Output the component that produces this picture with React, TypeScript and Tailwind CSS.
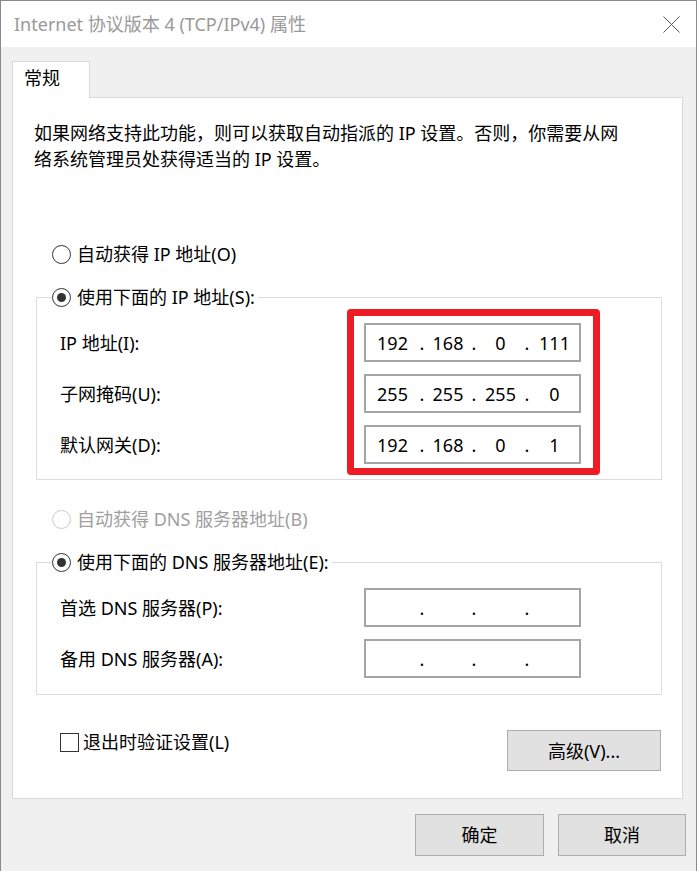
import React from 'react';

const font = { fontFamily: '"Noto Sans", "Noto Sans CJK SC", sans-serif' };

const Radio = ({ checked = false, disabled = false }: { checked?: boolean; disabled?: boolean }) => (
  <span
    className={`flex h-[19px] w-[19px] shrink-0 items-center justify-center rounded-full border-[1.5px] bg-white ${
      disabled ? 'border-[#cccccc]' : 'border-[#333333]'
    }`}
  >
    {checked && <span className="h-[9px] w-[9px] rounded-full bg-[#333333]" />}
  </span>
);

const IpBox = ({ parts }: { parts: string[] }) => {
  const widths = ['w-[53px]', 'w-[46px]', 'w-[47px]', 'flex-1'];
  return (
    <div className="flex h-[39px] w-[217px] items-center border-2 border-[#a5a5a5] bg-white text-[18px] leading-[26px] text-black">
      {parts.map((p, i) => (
        <React.Fragment key={i}>
          <span className={`${widths[i]} text-center`}>{p}</span>
          {i < 3 && <span className="w-[6px] text-center">.</span>}
        </React.Fragment>
      ))}
    </div>
  );
};

const FieldRow = ({ label, parts }: { label: string; parts: string[] }) => (
  <div className="flex h-[39px] items-center pl-[23px]">
    <span className="w-[304px] whitespace-nowrap">{label}</span>
    <IpBox parts={parts} />
  </div>
);

export default function App() {
  return (
    <div
      className="relative h-[871px] w-[697px] overflow-hidden border-x border-t border-[#8a8a8a] bg-[#f0f0f0] text-[18px] leading-[26px] text-black"
      style={font}
    >
      {/* title bar */}
      <div className="flex h-[46px] items-center justify-between bg-white pl-[13px] pr-[16px]">
        <span className="whitespace-nowrap text-[#999999]">Internet 协议版本 4 (TCP/IPv4) 属性</span>
        <svg width="17" height="17" viewBox="0 0 17 17" className="mt-[1px]">
          <path d="M0.5 0.5 L16.5 16.5 M16.5 0.5 L0.5 16.5" stroke="#555" strokeWidth="1" fill="none" />
        </svg>
      </div>

      <div className="pl-[11px] pr-[13px] pt-[14px]">
        {/* tab */}
        <div className="relative z-10 h-[37px] w-[78px] border border-b-0 border-[#d9d9d9] bg-white pl-[11px] pt-[3px]">
          常规
        </div>

        {/* panel */}
        <div className="-mt-px h-[702px] border border-[#d9d9d9] bg-white pl-[23px] pt-[22px]">
          <p className="-ml-[2px] whitespace-nowrap">
            如果网络支持此功能，则可以获取自动指派的 IP 设置。否则，你需要从网
            <br />
            络系统管理员处获得适当的 IP 设置。
          </p>

          <div className="mt-[69px] flex h-[26px] items-center gap-[6px] pl-[16px]">
            <Radio />
            <span>自动获得 IP 地址(O)</span>
          </div>

          <div className="mt-[30px] h-[183px] w-[626px] border border-[#dcdcdc]">
            <div className="-mt-[14px] ml-[15px] flex h-[26px] w-fit items-center gap-[6px] bg-white pr-[3px]">
              <Radio checked />
              <span>使用下面的 IP 地址(S):</span>
            </div>
            <div className="mt-[13px] flex flex-col gap-[12px]">
              <FieldRow label="IP 地址(I):" parts={['192', '168', '0', '111']} />
              <FieldRow label="子网掩码(U):" parts={['255', '255', '255', '0']} />
              <FieldRow label="默认网关(D):" parts={['192', '168', '0', '1']} />
            </div>
          </div>

          <div className="mt-[26px] flex h-[26px] items-center gap-[6px] pl-[16px] text-[#a0a0a0]">
            <Radio disabled />
            <span>自动获得 DNS 服务器地址(B)</span>
          </div>

          <div className="mt-[30px] h-[133px] w-[626px] border border-[#dcdcdc]">
            <div className="-mt-[14px] ml-[15px] flex h-[26px] w-fit items-center gap-[6px] bg-white pr-[3px]">
              <Radio checked />
              <span>使用下面的 DNS 服务器地址(E):</span>
            </div>
            <div className="mt-[13px] flex flex-col gap-[12px]">
              <FieldRow label="首选 DNS 服务器(P):" parts={['', '', '', '']} />
              <FieldRow label="备用 DNS 服务器(A):" parts={['', '', '', '']} />
            </div>
          </div>

          <div className="mt-[35px] flex w-[625px] items-start justify-between">
            <div className="mt-[2px] flex h-[20px] items-center gap-[4px] pl-[24px]">
              <span className="h-[19px] w-[19px] border-[1.5px] border-[#333333] bg-white" />
              <span>退出时验证设置(L)</span>
            </div>
            <button className="flex h-[41px] w-[154px] items-center justify-center border border-[#adadad] bg-[#e1e1e1]">
              高级(V)...
            </button>
          </div>
        </div>

        {/* dialog buttons */}
        <div className="-mr-[3px] mt-[15px] flex justify-end gap-[14px]">
          <button className="flex h-[42px] w-[129px] items-center justify-center border border-[#adadad] bg-[#e1e1e1]">
            确定
          </button>
          <button className="flex h-[42px] w-[128px] items-center justify-center border border-[#adadad] bg-[#e1e1e1]">
            取消
          </button>
        </div>
      </div>

      {/* red highlight annotation */}
      <div className="pointer-events-none absolute left-[346px] top-[308px] h-[166px] w-[253px] rounded-[4px] border-[7px] border-[#ed1c24]" />
    </div>
  );
}
